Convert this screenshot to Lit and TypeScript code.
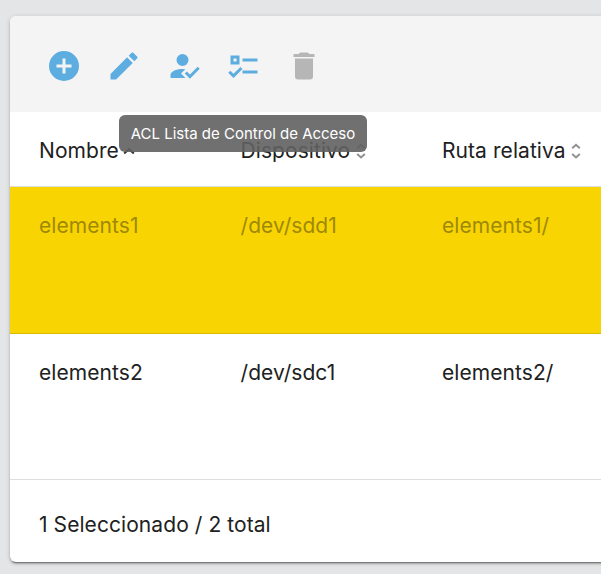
import { LitElement, html, css, svg } from "lit";
import { customElement } from "lit/decorators.js";
import { classMap } from "lit/directives/class-map.js";

const ACTIONS = [
  { path: "M17,13H13V17H11V13H7V11H11V7H13V11H17M12,2A10,10 0 0,0 2,12A10,10 0 0,0 12,22A10,10 0 0,0 22,12A10,10 0 0,0 12,2Z", disabled: false },
  { path: "M20.71,7.04C21.1,6.65 21.1,6 20.71,5.63L18.37,3.29C18,2.9 17.35,2.9 16.96,3.29L15.12,5.12L18.87,8.87M3,17.25V21H6.75L17.81,9.93L14.06,6.18L3,17.25Z", disabled: false },
  { path: "M21.1,12.5L22.5,13.91L15.97,20.5L12.5,17L13.9,15.59L15.97,17.67L21.1,12.5M10,17L13,20H3V18C3,15.79 6.58,14 11,14L12.89,14.11L10,17M11,4A4,4 0 0,1 15,8A4,4 0 0,1 11,12A4,4 0 0,1 7,8A4,4 0 0,1 11,4Z", disabled: false },
  { path: "M3,5H9V11H3V5M5,7V9H7V7H5M11,7H21V9H11V7M11,15H21V17H11V15M5,20L1.5,16.5L2.91,15.09L5,17.17L9.59,12.59L11,14L5,20Z", disabled: false, tip: "ACL Lista de Control de Acceso" },
  { path: "M19,4H15.5L14.5,3H9.5L8.5,4H5V6H19V4M6,19A2,2 0 0,0 8,21H16A2,2 0 0,0 18,19V7H6V19Z", disabled: true },
];

const COLUMNS = [
  { label: "Nombre", sorted: true },
  { label: "Dispositivo", sorted: false },
  { label: "Ruta relativa", sorted: false },
];

const ROWS = [
  { cells: ["elements1", "/dev/sdd1", "elements1/"], selected: true },
  { cells: ["elements2", "/dev/sdc1", "elements2/"], selected: false },
];

@customElement("app-root")
export class AppRoot extends LitElement {
  static styles = css`
    :host {
      display: block;
      box-sizing: border-box;
      height: 574px;
      padding: 16px 0 12px 10px;
      overflow: hidden;
      background: #e4e5e7;
      color: #212121;
      font: 400 21px/30px Inter, "Noto Sans", sans-serif;
      letter-spacing: 0.07px;
    }
    .card {
      box-sizing: border-box;
      width: 660px;
      height: 546px;
      background: #fff;
      border-radius: 6px;
      box-shadow: 0 3px 1px -2px rgba(0, 0, 0, 0.3), 0 2px 2px rgba(0, 0, 0, 0.2), 0 1px 5px rgba(0, 0, 0, 0.16);
    }
    .toolbar {
      display: flex;
      align-items: center;
      gap: 24px;
      box-sizing: border-box;
      height: 96px;
      padding: 4px 36px 0;
      background: #f4f4f4;
      border-radius: 6px 6px 0 0;
    }
    .action {
      position: relative;
      width: 36px;
      height: 36px;
      color: #5dade0;
    }
    .action.disabled {
      color: #b6b6b6;
    }
    .icon {
      display: block;
      width: 36px;
      height: 36px;
      fill: currentColor;
    }
    .tip {
      position: absolute;
      top: 67px;
      left: 17px;
      transform: translateX(-50%);
      z-index: 1;
      box-sizing: border-box;
      width: 248px;
      height: 37px;
      border-radius: 6px;
      background: rgba(97, 97, 97, 0.9);
      color: #fff;
      font-size: 15px;
      letter-spacing: 0;
      line-height: 38px;
      text-align: center;
      white-space: nowrap;
    }
    .row {
      display: grid;
      grid-template-columns: 201.5px 201.5px 1fr;
      box-sizing: border-box;
      padding-left: 29px;
      border-bottom: 1px solid #dedede;
      white-space: nowrap;
    }
    .head {
      height: 75px;
      padding-top: 24px;
    }
    .body {
      height: 147px;
      padding-top: 24px;
    }
    .last {
      height: 146px;
    }
    .selected {
      background: #f8d502;
      border-bottom-color: #d8b904;
      color: #9f8807;
    }
    .heading {
      display: flex;
    }
    .sort {
      width: 12px;
      height: 18px;
      margin: 6px 0 0 4.5px;
      fill: none;
      stroke: #909090;
      stroke-width: 2;
    }
    .sort.on {
      stroke: #333;
    }
    .footer {
      padding: 30px 29px 0;
    }
  `;

  render() {
    return html`
      <section class="card">
        <div class="toolbar">
          ${ACTIONS.map(
            (a) => html`<div class=${classMap({ action: true, disabled: a.disabled })}>
              <svg class="icon" viewBox="0 0 24 24"><path d=${a.path}></path></svg>
              ${a.tip ? html`<div class="tip">${a.tip}</div>` : ""}
            </div>`
          )}
        </div>
        <div class="row head">
          ${COLUMNS.map(
            (c) => html`<div class="heading">
              <span>${c.label}</span>
              <svg class=${classMap({ sort: true, on: c.sorted })} viewBox="0 0 12 18">
                ${c.sorted
                  ? svg`<path d="M1.2 11.4 6 7 10.8 11.4"></path>`
                  : svg`<path d="M2.2 6.2 6 2.8 9.8 6.2"></path><path d="M2.2 12 6 15.4 9.8 12"></path>`}
              </svg>
            </div>`
          )}
        </div>
        ${ROWS.map(
          (r, i) => html`<div class=${classMap({ row: true, body: true, selected: r.selected, last: i === ROWS.length - 1 })}>
            ${r.cells.map((cell) => html`<span>${cell}</span>`)}
          </div>`
        )}
        <div class="footer">1 Seleccionado / 2 total</div>
      </section>
    `;
  }
}
